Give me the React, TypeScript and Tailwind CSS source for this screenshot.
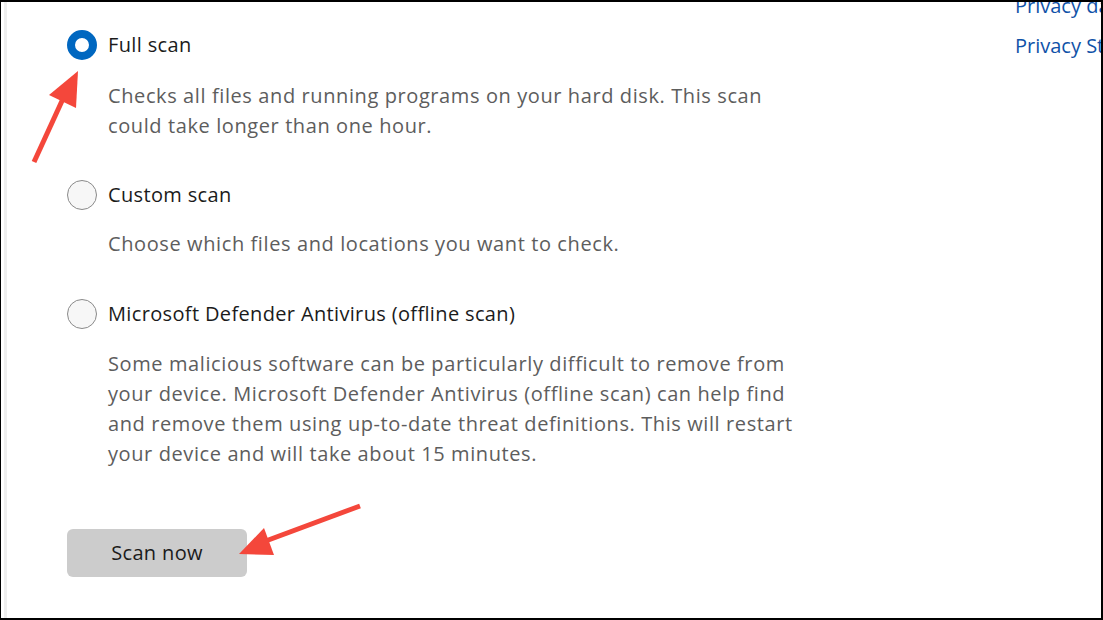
import React from 'react';

type Option = {
  title: string;
  desc: string[];
  checked?: boolean;
  gap: string;
  descGap: string;
};

const options: Option[] = [
  {
    title: 'Full scan',
    desc: [
      'Checks all files and running programs on your hard disk. This scan',
      'could take longer than one hour.',
    ],
    checked: true,
    gap: '',
    descGap: 'mt-[21px]',
  },
  {
    title: 'Custom scan',
    desc: ['Choose which files and locations you want to check.'],
    gap: 'mt-[39px]',
    descGap: 'mt-[19px]',
  },
  {
    title: 'Microsoft Defender Antivirus (offline scan)',
    desc: [
      'Some malicious software can be particularly difficult to remove from',
      'your device. Microsoft Defender Antivirus (offline scan) can help find',
      'and remove them using up-to-date threat definitions. This will restart',
      'your device and will take about 15 minutes.',
    ],
    gap: 'mt-[40px]',
    descGap: 'mt-[20px]',
  },
];

const Radio: React.FC<{ checked?: boolean }> = ({ checked }) =>
  checked ? (
    <span className="w-[30px] h-[30px] rounded-full border-[8px] border-[#0067c0] bg-white shrink-0" />
  ) : (
    <span className="w-[30px] h-[30px] rounded-full border-[1.5px] border-[#8a8a8a] bg-[#f7f7f7] shrink-0" />
  );

const App: React.FC = () => {
  return (
    <div
      className="relative w-[1103px] h-[620px] overflow-hidden bg-white border-t-2 border-b-2 border-l border-r-2 border-black text-[20px]"
      style={{ fontFamily: '"Open Sans", "Noto Sans", sans-serif' }}
    >
      <div className="absolute left-[3px] top-0 bottom-0 w-[3px] bg-[#eeeeee]" />

      <div className="flex justify-between h-full">
        {/* Scan options */}
        <div className="pl-[66px] pt-[28px] flex flex-col">
          {options.map((o) => (
            <div key={o.title} className={o.gap}>
              <label className="flex items-center gap-[11px] h-[30px]">
                <Radio checked={o.checked} />
                <span className="text-[#1b1b1b] leading-[30px] tracking-[0.35px]">{o.title}</span>
              </label>
              <div className={`pl-[41px] ${o.descGap} text-[#5d5d5d] leading-[30px] tracking-[0.6px]`}>
                {o.desc.map((l) => (
                  <div key={l}>{l}</div>
                ))}
              </div>
            </div>
          ))}

          <button className="mt-[60px] w-[180px] h-[48px] rounded-[6px] bg-[#cccccc] text-[#1b1b1b] tracking-[0.35px]">
            Scan now
          </button>
        </div>

        {/* Related links */}
        <div className="-mt-[16px] w-[86px] shrink-0 whitespace-nowrap text-[#0f52a8] leading-[40px]">
          <div>Privacy dashboard</div>
          <div>Privacy Statement</div>
        </div>
      </div>

      {/* Annotation arrows */}
      <svg className="absolute inset-0 pointer-events-none" width="1103" height="620">
        <line x1="33" y1="160" x2="66" y2="88" stroke="#f4473b" strokeWidth="5" />
        <polygon points="77,69 48,93 75,106" fill="#f4473b" />
        <line x1="359" y1="504" x2="262" y2="540" stroke="#f4473b" strokeWidth="5" />
        <polygon points="238,552 263,526 273,553" fill="#f4473b" />
      </svg>
    </div>
  );
};

export default App;
